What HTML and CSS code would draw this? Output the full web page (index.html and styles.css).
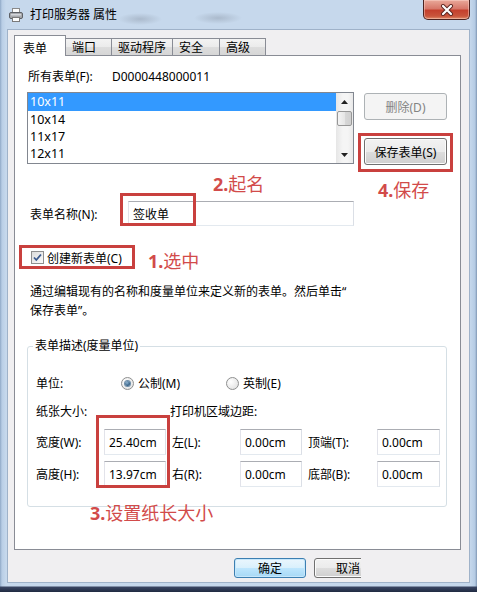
FILE: index.html
```html
<!DOCTYPE html>
<html lang="zh-CN">
<head>
<meta charset="utf-8">
<title>打印服务器 属性</title>
<link rel="stylesheet" href="styles.css">
</head>
<body>
<div class="window">
  <div class="titlebar">
    <svg class="app-icon" width="16" height="16" viewBox="0 0 16 16">
      <rect x="4.5" y="1.5" width="7" height="4" fill="#fdfdfd" stroke="#8a8a8a"/>
      <rect x="1.5" y="5.5" width="13" height="6" rx="1.5" fill="#a7a9ad" stroke="#5d6066"/>
      <rect x="3" y="7" width="10" height="1.5" fill="#d4d6da"/>
      <rect x="4.5" y="10.5" width="7" height="4" fill="#fdfdfd" stroke="#7a7a7a"/>
    </svg>
    <span class="title">打印服务器 属性</span>
    <div class="close">
      <svg width="14" height="12" viewBox="0 0 14 12">
        <path d="M3 2 L11 10 M11 2 L3 10" stroke="#5a2620" stroke-width="4" stroke-linecap="round"/>
        <path d="M3 2 L11 10 M11 2 L3 10" stroke="#ffffff" stroke-width="2.2" stroke-linecap="round"/>
      </svg>
    </div>
  </div>

  <div class="client">
    <div class="tabs">
      <div class="tab active t1">表单</div>
      <div class="tab t2">端口</div>
      <div class="tab t3">驱动程序</div>
      <div class="tab t4">安全</div>
      <div class="tab t5">高级</div>
    </div>

    <div class="panel">
      <div class="all-forms">
        <span class="all-label">所有表单(F):</span>
        <span>D0000448000011</span>
      </div>

      <div class="list-row">
        <div class="listbox">
          <div class="items">
            <div class="item selected">10x11</div>
            <div class="item">10x14</div>
            <div class="item">11x17</div>
            <div class="item">12x11</div>
          </div>
          <div class="scrollbar">
            <div class="arrow"><svg width="7" height="4" viewBox="0 0 7 4"><path d="M0 4 L3.5 0 L7 4 Z" fill="#222"/></svg></div>
            <div class="track"><div class="thumb"></div></div>
            <div class="arrow"><svg width="7" height="4" viewBox="0 0 7 4"><path d="M0 0 L3.5 4 L7 0 Z" fill="#222"/></svg></div>
          </div>
        </div>
        <div class="side-buttons">
          <div class="btn disabled">删除(D)</div>
          <div class="btn">保存表单(S)</div>
        </div>
      </div>

      <div class="name-row">
        <span class="name-label">表单名称(N):</span>
        <div class="textbox name-box">签收单</div>
      </div>

      <div class="check-row">
        <span class="checkbox">
          <svg width="11" height="11" viewBox="0 0 11 11"><path d="M2 5.5 L4.3 8 L9 2.5" fill="none" stroke="#3b5a8e" stroke-width="1.8"/></svg>
        </span>
        <span>创建新表单(C)</span>
      </div>

      <p class="desc">通过编辑现有的名称和度量单位来定义新的表单。然后单击“<br>保存表单”。</p>

      <fieldset class="group">
        <legend>表单描述(度量单位)</legend>
        <div class="units-row">
          <span class="units-label">单位:</span>
          <span class="radio-opt first"><span class="radio on"></span>公制(M)</span>
          <span class="radio-opt"><span class="radio"></span>英制(E)</span>
        </div>
        <div class="grid">
          <span class="g-head">纸张大小:</span>
          <span class="g-head2">打印机区域边距:</span>
          <span class="g-label">宽度(W):</span>
          <div class="textbox small">25.40cm</div>
          <span class="g-label pad">左(L):</span>
          <div class="textbox small">0.00cm</div>
          <span class="g-label pad">顶端(T):</span>
          <div class="textbox small">0.00cm</div>
          <span class="g-label">高度(H):</span>
          <div class="textbox small">13.97cm</div>
          <span class="g-label pad">右(R):</span>
          <div class="textbox small">0.00cm</div>
          <span class="g-label pad">底部(B):</span>
          <div class="textbox small">0.00cm</div>
        </div>
      </fieldset>
    </div>

    <div class="footer">
      <div class="btn ok">确定</div>
      <div class="clip"><div class="btn cancel">取消</div></div>
    </div>
  </div>

  <div class="mark box-save"></div>
  <div class="mark box-name"></div>
  <div class="mark box-check"></div>
  <div class="mark box-size"></div>
  <div class="note note-name"><b>2.</b>起名</div>
  <div class="note note-save"><b>4.</b>保存</div>
  <div class="note note-check"><b>1.</b>选中</div>
  <div class="note note-size"><b>3.</b>设置纸长大小</div>
</div>
</body>
</html>
```

FILE: styles.css
```css
* { box-sizing: border-box; }
html, body { margin: 0; padding: 0; }
body {
  font-family: "Noto Sans", "Noto Sans CJK SC", sans-serif;
  font-size: 12px;
  color: #000;
  background: #2a3550;
}
.window {
  position: relative;
  width: 477px;
  height: 592px;
  display: flex;
  flex-direction: column;
  background:
    linear-gradient(to bottom, rgba(0,0,0,0) 0, rgba(0,0,0,0) 586px, #3a4663 587px, #1f2a42 592px),
    linear-gradient(to right, #8fa8c6 0, #b9cee6 2px, #c6d8ec 6px, #c6d8ec 470px, #b5cbe4 475px, #7f96b3 477px),
    linear-gradient(to bottom, #dde9f6 0, #c9dbee 29px, #b8cde6 100%);
  overflow: hidden;
}
.titlebar {
  height: 29px;
  display: flex;
  align-items: flex-start;
  padding-left: 8px;
  background:
    radial-gradient(ellipse 22px 6px at 140px 19px, rgba(120,130,145,0.35), rgba(120,130,145,0)),
    radial-gradient(ellipse 24px 6px at 218px 18px, rgba(120,130,145,0.35), rgba(120,130,145,0));
}
.app-icon { margin-top: 7px; flex: none; }
.title {
  margin-left: 6px;
  margin-top: 7px;
  line-height: 16px;
  color: #000;
}
.close {
  margin-left: auto;
  margin-right: 7px;
  width: 47px;
  height: 20px;
  border: 1px solid #4b2320;
  border-top: none;
  border-radius: 0 0 5px 5px;
  background: linear-gradient(to bottom, #e9a99a 0%, #d7786a 45%, #c4402d 55%, #c9553c 85%, #e08d6a 100%);
  box-shadow: inset 0 0 0 1px rgba(255,220,210,0.45);
  display: flex;
  align-items: center;
  justify-content: center;
}

.client {
  margin: 0 7px;
  height: 554px;
  background: #f0eff1;
  border: 1px solid #9fb2c9;
  padding: 5px 0 0 6px;
  display: flex;
  flex-direction: column;
}

.tabs {
  display: flex;
  align-items: flex-start;
  height: 21px;
  margin-bottom: -1px;
  position: relative;
  z-index: 2;
}
.tab {
  height: 17px;
  margin-top: 3px;
  border: 1px solid #898c95;
  border-bottom: none;
  background: linear-gradient(to bottom, #f3f3f3 0%, #ebebeb 50%, #dddddd 51%, #d6d6d6 100%);
  padding: 1px 0 0 6px;
  line-height: 15px;
  margin-left: -1px;
  color: #000;
}
.tab.active {
  height: 21px;
  margin-top: 0;
  margin-left: 0;
  background: #fff;
  padding: 4px 0 0 8px;
  line-height: 17px;
  position: relative;
  z-index: 3;
}
.t1 { width: 52px; }
.t2 { width: 47px; }
.t3 { width: 62px; }
.t4 { width: 48px; }
.t5 { width: 47px; }

.panel {
  width: 447px;
  height: 495px;
  border: 1px solid #898c95;
  background: #fff;
  position: relative;
  z-index: 1;
}

.all-forms {
  margin: 13px 0 0 13px;
  height: 16px;
  line-height: 16px;
  display: flex;
}
.all-label { width: 84px; }

.list-row {
  display: flex;
  margin: 7px 0 0 12px;
}
.listbox {
  width: 327px;
  height: 72px;
  border: 1px solid #828790;
  display: flex;
  background: #fff;
}
.items { flex: 1; }
.item {
  height: 17px;
  line-height: 17px;
  padding-left: 2px;
  font-size: 12.5px;
}
.item.selected {
  background: #3399ff;
  color: #fff;
  height: 18px;
}
.scrollbar {
  width: 17px;
  display: flex;
  flex-direction: column;
  background: linear-gradient(to right, #e6e6e6, #f5f5f5 40%, #f5f5f5 70%, #e9e9e9);
}
.arrow {
  height: 17px;
  display: flex;
  align-items: center;
  justify-content: center;
}
.track { flex: 1; padding: 1px 1px; }
.thumb {
  height: 15px;
  border: 1px solid #979797;
  border-radius: 2px;
  background: linear-gradient(to right, #f4f4f4, #e6e6e6 50%, #d8d8d8 51%, #d0d0d0);
}
.side-buttons {
  margin-left: 10px;
  padding-top: 1px;
  display: flex;
  flex-direction: column;
  gap: 18px;
}
.btn {
  width: 83px;
  height: 27px;
  border: 1px solid #707070;
  border-radius: 3px;
  background: linear-gradient(to bottom, #f2f2f2 0%, #ebebeb 50%, #dddddd 51%, #cfcfcf 100%);
  box-shadow: inset 0 0 0 1px #fbfbfb;
  display: flex;
  align-items: center;
  justify-content: center;
  color: #000;
}
.btn.disabled {
  border-color: #adb2b5;
  background: #f4f4f4;
  box-shadow: none;
  color: #838383;
}

.name-row {
  margin-top: 36px;
  padding-left: 15px;
  display: flex;
  align-items: center;
}
.name-label { width: 98px; }
.textbox {
  border: 1px solid;
  border-color: #abadb3 #dbdfe6 #e3e9ef #e2e3ea;
  background: #fff;
  padding-left: 4px;
  display: flex;
  align-items: center;
}
.name-box { width: 226px; height: 25px; }

.check-row {
  margin-top: 25px;
  padding-left: 16px;
  height: 13px;
  display: flex;
  align-items: center;
  gap: 3px;
}
.checkbox {
  width: 13px;
  height: 13px;
  border: 1px solid #8f8f8f;
  background: linear-gradient(135deg, #dcdcdc, #fbfbfb);
  display: flex;
  align-items: center;
  justify-content: center;
}

.desc {
  margin: 18px 0 0 0;
  padding-left: 15px;
  line-height: 19px;
}

.group {
  margin: 18px 0 0 12px;
  width: 420px;
  border: 1px solid #d5dfe5;
  border-radius: 3px;
  padding: 0 0 19px 8px;
  min-width: 0;
}
.group legend {
  margin-left: -3px;
  padding: 0 2px;
  line-height: 16px;
}
.units-row {
  margin-top: 19px;
  height: 20px;
  display: flex;
  align-items: center;
}
.units-label { width: 85px; }
.radio-opt { display: flex; align-items: center; }
.radio-opt.first { width: 105px; }
.radio {
  width: 13px;
  height: 13px;
  border-radius: 50%;
  border: 1px solid #8e8f8f;
  background: radial-gradient(circle at 35% 35%, #ffffff, #dcdcdc);
  margin-right: 4px;
  display: flex;
  align-items: center;
  justify-content: center;
}
.radio.on::after {
  content: "";
  width: 5px;
  height: 5px;
  border-radius: 50%;
  background: radial-gradient(circle at 40% 35%, #8fb2cf, #2d5b82 70%);
  box-shadow: 0 0 0 1px #6f8ea8;
}
.grid {
  margin-top: 10px;
  display: grid;
  grid-template-columns: 68px 62px 74px 62px 75px 63px;
  grid-template-rows: 20px 26px 26px;
  row-gap: 6px;
  align-items: center;
}
.g-head { grid-column: 1 / 3; margin-bottom: 4px; }
.g-head2 { grid-column: 3 / 7; padding-left: 4px; margin-bottom: 4px; }
.g-label.pad { padding-left: 6px; }
.textbox.small { height: 26px; }

.footer {
  margin-top: 8px;
  padding-left: 220px;
  display: flex;
  gap: 8px;
}
.btn.ok {
  width: 72px;
  height: 20px;
  border-color: #3c7fb1;
  background: linear-gradient(to bottom, #eaf6fd 0%, #d9f0fc 50%, #bee6fd 51%, #a7d9f5 100%);
  box-shadow: inset 0 0 0 1px #c6e7fb;
}
.clip {
  width: 47px;
  height: 20px;
  overflow: hidden;
}
.btn.cancel {
  width: 73px;
  height: 20px;
  padding-right: 26px;
  justify-content: flex-end;
}

.mark {
  position: absolute;
  z-index: 10;
  border: 3px solid #c9403e;
}
.box-save { left: 358px; top: 133px; width: 95px; height: 39px; }
.box-name { left: 120px; top: 193px; width: 76px; height: 33px; }
.box-check { left: 19px; top: 245px; width: 116px; height: 24px; }
.box-size { left: 96px; top: 415px; width: 74px; height: 73px; }

.note {
  position: absolute;
  z-index: 10;
  font-size: 18px;
  line-height: 20px;
  color: #d24b4a;
  white-space: nowrap;
}
.note b { font-weight: 700; }
.note-name { left: 213px; top: 174px; }
.note-save { left: 378px; top: 180px; }
.note-check { left: 148px; top: 251px; }
.note-size { left: 90px; top: 503px; }
```
